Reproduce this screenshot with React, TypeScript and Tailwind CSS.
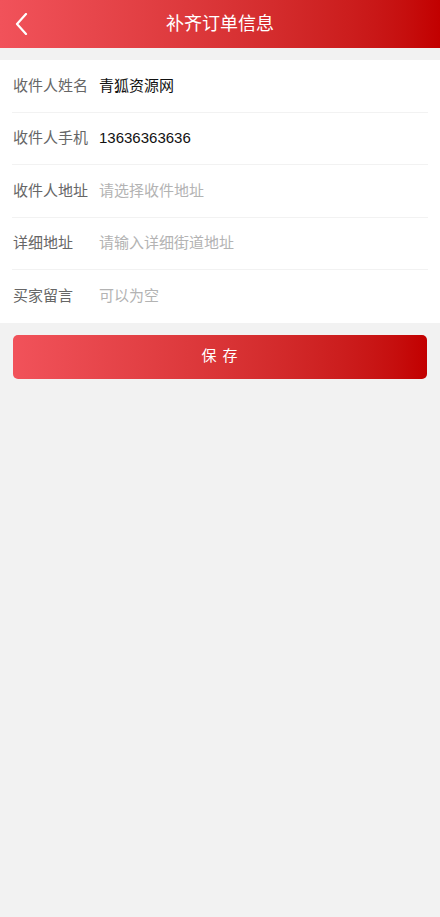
const fields = [
  { label: '收件人姓名', value: '青狐资源网' },
  { label: '收件人手机', value: '13636363636' },
  { label: '收件人地址', placeholder: '请选择收件地址' },
  { label: '详细地址', placeholder: '请输入详细街道地址' },
  { label: '买家留言', placeholder: '可以为空' },
];

export default function App() {
  return (
    <div
      className="min-h-[917px] bg-[#f2f2f2]"
      style={{ fontFamily: '"Liberation Sans", "Noto Sans CJK SC", sans-serif' }}
    >
      {/* Header */}
      <div className="relative flex h-12 items-center justify-center bg-gradient-to-r from-[#f1525a] to-[#c20000]">
        <button className="absolute left-[12px] top-0 flex h-12 w-[18px] items-center justify-center text-white">
          <svg width="14" height="22" viewBox="0 0 14 22" fill="none">
            <polyline
              points="12,1 3,11 12,21"
              stroke="currentColor"
              strokeWidth="2.2"
              strokeLinecap="round"
              strokeLinejoin="round"
            />
          </svg>
        </button>
        <h1 className="text-[18px] text-white">补齐订单信息</h1>
      </div>

      {/* Form */}
      <div className="mt-3 bg-white px-3">
        {fields.map((f, i) => (
          <div
            key={f.label}
            className={`flex h-[52.5px] items-center ${i < fields.length - 1 ? 'border-b border-[#f2f2f2]' : ''}`}
          >
            <span className="w-[87px] shrink-0 pl-px text-[15px] text-[#666]">{f.label}</span>
            {f.value ? (
              <span className="text-[15px] text-[#111]">{f.value}</span>
            ) : (
              <span className="text-[15px] text-[#b3b3b3]">{f.placeholder}</span>
            )}
          </div>
        ))}
      </div>

      {/* Save */}
      <div className="px-[13px] pt-3">
        <button className="flex h-11 w-full items-center justify-center rounded-[5px] bg-gradient-to-r from-[#f1525a] to-[#c20000] text-[15px] tracking-[1px] text-white">
          保 存
        </button>
      </div>
    </div>
  );
}
